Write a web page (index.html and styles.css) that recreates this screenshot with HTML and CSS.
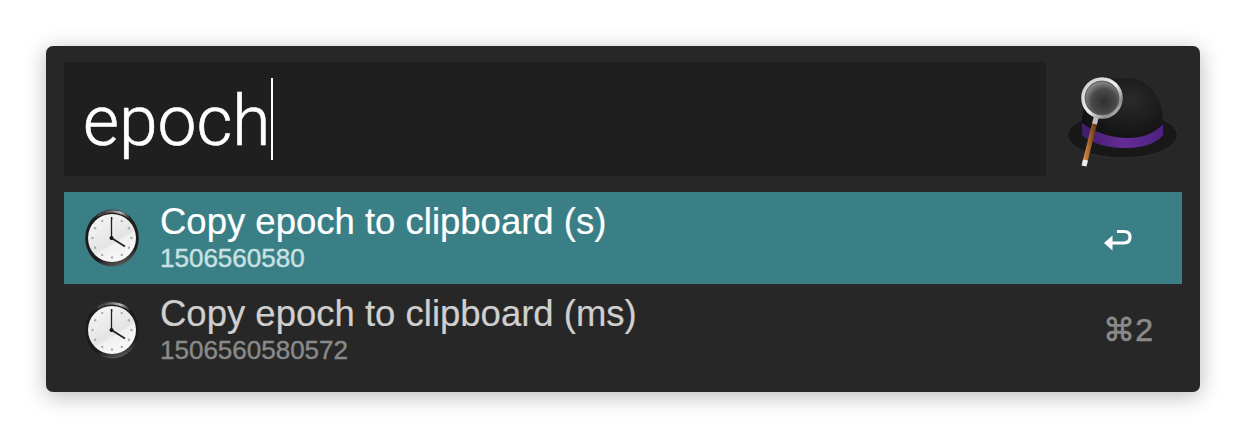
FILE: index.html
```html
<!DOCTYPE html>
<html lang="en">
  <head>
    <meta charset="UTF-8" />
    <title>Epoch search</title>
    <link rel="stylesheet" href="styles.css">
  </head>
  <body>
    <svg class="defs" width="0" height="0">
      <defs>
        <linearGradient id="rim" x1="0.3" y1="0" x2="0.6" y2="1">
          <stop offset="0" stop-color="#4a4a4a" />
          <stop offset="0.12" stop-color="#1c1c1c" />
          <stop offset="0.8" stop-color="#1c1c1c" />
          <stop offset="1" stop-color="#5a5a5a" />
        </linearGradient>
        <linearGradient id="rimtop" x1="0" y1="0" x2="1" y2="0">
          <stop offset="0.2" stop-color="#444" />
          <stop offset="0.7" stop-color="#b8b8b8" />
          <stop offset="1" stop-color="#222" />
        </linearGradient>
        <linearGradient id="face" x1="0.2" y1="0" x2="0.8" y2="1">
          <stop offset="0" stop-color="#f6f6f6" />
          <stop offset="0.58" stop-color="#e4e4e4" />
          <stop offset="0.62" stop-color="#f1f1f1" />
          <stop offset="1" stop-color="#fafafa" />
        </linearGradient>
        <radialGradient id="crown" cx="0.6" cy="0.35" r="0.7">
          <stop offset="0" stop-color="#2a2a2a" />
          <stop offset="1" stop-color="#0f0f0f" />
        </radialGradient>
        <radialGradient id="lens" cx="0.55" cy="0.6" r="0.6">
          <stop offset="0" stop-color="#2f2f2f" />
          <stop offset="0.55" stop-color="#4a4a4a" />
          <stop offset="1" stop-color="#a0a0a0" />
        </radialGradient>
        <linearGradient id="metal" x1="0" y1="0" x2="1" y2="1">
          <stop offset="0" stop-color="#c8c8c8" />
          <stop offset="0.5" stop-color="#f0f0f0" />
          <stop offset="0.8" stop-color="#8c8c8c" />
          <stop offset="1" stop-color="#e0e0e0" />
        </linearGradient>
        <linearGradient id="handle" x1="0" y1="0" x2="1" y2="0">
          <stop offset="0" stop-color="#d08a45" />
          <stop offset="1" stop-color="#6d3c16" />
        </linearGradient>
        <linearGradient id="band" x1="0" y1="0" x2="1" y2="0">
          <stop offset="0" stop-color="#3f1c68" />
          <stop offset="0.5" stop-color="#652c96" />
          <stop offset="1" stop-color="#4c2280" />
        </linearGradient>
        <symbol id="clock" viewBox="0 0 56 58">
          <ellipse cx="28" cy="29" rx="26.800" ry="28.500" fill="url(#rim)" />
          <path d="M14 6.500A27 27 0 0 1 46 9" fill="none" stroke="url(#rimtop)" stroke-width="2.400" />
          <circle cx="28" cy="29" r="24" fill="url(#face)" />
          <g fill="#aaa">
            <circle cx="28" cy="9.500" r="1.200" />
            <circle cx="37.800" cy="12.100" r="1.200" />
            <circle cx="44.900" cy="19.200" r="1.200" />
            <circle cx="47.500" cy="29" r="1.200" />
            <circle cx="44.900" cy="38.800" r="1.200" />
            <circle cx="37.800" cy="45.900" r="1.200" />
            <circle cx="28" cy="48.500" r="1.200" />
            <circle cx="18.200" cy="45.900" r="1.200" />
            <circle cx="11.100" cy="38.800" r="1.200" />
            <circle cx="8.500" cy="29" r="1.200" />
            <circle cx="11.100" cy="19.200" r="1.200" />
            <circle cx="18.200" cy="12.100" r="1.200" />
          </g>
          <path d="M27.500 8V29" stroke="#222" stroke-width="1.300" fill="none" />
          <path d="M27.500 29L41 37.500" stroke="#222" stroke-width="1.800" fill="none" />
          <circle cx="27.500" cy="29" r="2" fill="#111" />
        </symbol>
      </defs>
    </svg>

    <div class="window">
      <div class="search-row">
        <div class="search-box">
          <span class="query">epoch</span><span class="caret"></span>
        </div>
        <svg class="logo" viewBox="0 0 112 110" width="112" height="110">
          <ellipse cx="56.500" cy="71" rx="55" ry="23" fill="#181818" stroke="#303030" />
          <path d="M16 60C16 30 30 14 58 14C84 14 97 32 97 60C97 84 16 84 16 60Z" fill="url(#crown)" />
          <path d="M16 59C30 70 50 74 62 74C78 74 90 68 97 60L97 71C90 80 76 84 60 84C42 84 26 80 16 71Z" fill="url(#band)" />
          <path d="M29 58L18.500 100" stroke="url(#handle)" stroke-width="5" />
          <path d="M19.500 96L18 102" stroke="#eee" stroke-width="5" />
          <path d="M31 50L28.500 60" stroke="#c0c0c0" stroke-width="5" />
          <circle cx="36" cy="34" r="19" fill="url(#lens)" stroke="url(#metal)" stroke-width="3.500" />
          <circle cx="36" cy="34" r="16.800" fill="none" stroke="#5a5a5a" stroke-width="1" />
        </svg>
      </div>

      <ul class="results">
        <li class="result selected">
          <svg class="clock" width="56" height="58"><use href="#clock" /></svg>
          <div class="result-text">
            <div class="title">Copy epoch to clipboard (s)</div>
            <div class="subtitle">1506560580</div>
          </div>
          <svg class="shortcut-icon" viewBox="0 0 28 22" width="28" height="22">
            <path d="M13 2.500H20C24 2.500 26 4.500 26 8C26 11.500 24 14 20 14H5" fill="none" stroke="#fff" stroke-width="3.200" />
            <path d="M0 14L8.500 6.500V21.500Z" fill="#fff" />
          </svg>
        </li>
        <li class="result">
          <svg class="clock" width="56" height="58"><use href="#clock" /></svg>
          <div class="result-text">
            <div class="title">Copy epoch to clipboard (ms)</div>
            <div class="subtitle">1506560580572</div>
          </div>
          <span class="shortcut">⌘2</span>
        </li>
      </ul>
    </div>
  </body>
</html>
```

FILE: styles.css
```css
html,
body {
  height: 100%;
}
body {
  margin: 0;
  padding: 46px 46px 46px;
  box-sizing: border-box;
  background-color: #fff;
  font-family: "Liberation Sans", Arial, sans-serif;
  overflow: hidden;
}
.defs {
  display: block;
  height: 0;
}
.window {
  height: 346px;
  padding: 16px 18px;
  box-sizing: border-box;
  background-color: #272727;
  border-radius: 7px;
  box-shadow: 0 4px 22px rgba(0, 0, 0, 0.28);
}
.search-row {
  display: flex;
  align-items: center;
  height: 114px;
}
.search-box {
  flex: 0 0 982px;
  height: 114px;
  display: flex;
  align-items: center;
  padding-left: 19px;
  box-sizing: border-box;
  background-color: #1f1f1f;
}
.query {
  margin-top: 4px;
  font-family: Roboto, sans-serif;
  font-size: 69.5px;
  font-weight: 300;
  color: #fff;
  -webkit-text-stroke: 0.6px #fff;
}
.caret {
  width: 2px;
  height: 82px;
  margin-left: 1px;
  background-color: #fff;
}
.logo {
  margin-left: 20px;
}
.results {
  list-style: none;
  margin: 16px 0 0;
  padding: 0;
}
.result {
  display: flex;
  align-items: center;
  height: 92px;
  padding: 0 29px 0 20px;
  color: #cfcfcf;
}
.result.selected {
  background-color: #3b7f86;
  color: #fff;
}
.clock {
  flex: none;
}
.result-text {
  flex: 1;
  margin-left: 20px;
}
.title {
  font-size: 36.5px;
  line-height: 38px;
  -webkit-text-stroke: 0.2px;
}
.subtitle {
  margin-top: 2px;
  font-size: 26px;
  line-height: 30px;
  color: #8a8a8a;
  -webkit-text-stroke: 0.4px;
}
.selected .subtitle {
  color: #c8e2e4;
}
.shortcut {
  font-size: 32px;
  color: #8a8a8a;
  -webkit-text-stroke: 0.6px;
}
.shortcut-icon {
  margin: 4px 21px 0 0;
}
```
